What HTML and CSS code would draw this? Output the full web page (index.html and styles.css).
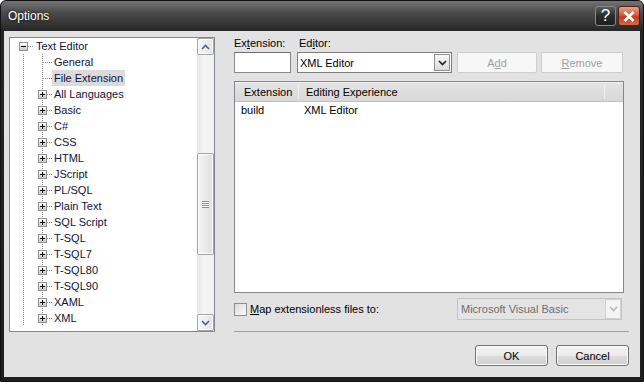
FILE: index.html
```html
<!DOCTYPE html>
<html lang="en">
<head>
    <meta charset="UTF-8">
    <title>Options</title>
    <link rel="stylesheet" href="styles.css">
</head>
<body>
    <div class="window">
        <div class="titlebar">
            <span class="title">Options</span>
            <span class="cap-btn help">?</span>
            <span class="cap-btn close">
                <svg width="12" height="11" viewBox="0 0 12 11"><path d="M1.5 1 L10.5 10 M10.5 1 L1.5 10" stroke="#fff" stroke-width="2.6" fill="none"/></svg>
            </span>
        </div>

        <div class="client">
            <div class="tree">
                <div class="tree-items">
                    <div class="row root">
                        <span class="twig"><span class="exp minus"></span><span class="dash"></span></span>
                        <span class="label">Text Editor</span>
                    </div>
                    <div class="children">
                        <div class="row"><span class="twig"><span class="gap"></span><span class="dash"></span></span><span class="label">General</span></div>
                        <div class="row"><span class="twig"><span class="gap"></span><span class="dash"></span></span><span class="label selected">File Extension</span></div>
                        <div class="row"><span class="twig"><span class="exp"></span><span class="dash"></span></span><span class="label">All Languages</span></div>
                        <div class="row"><span class="twig"><span class="exp"></span><span class="dash"></span></span><span class="label">Basic</span></div>
                        <div class="row"><span class="twig"><span class="exp"></span><span class="dash"></span></span><span class="label">C#</span></div>
                        <div class="row"><span class="twig"><span class="exp"></span><span class="dash"></span></span><span class="label">CSS</span></div>
                        <div class="row"><span class="twig"><span class="exp"></span><span class="dash"></span></span><span class="label">HTML</span></div>
                        <div class="row"><span class="twig"><span class="exp"></span><span class="dash"></span></span><span class="label">JScript</span></div>
                        <div class="row"><span class="twig"><span class="exp"></span><span class="dash"></span></span><span class="label">PL/SQL</span></div>
                        <div class="row"><span class="twig"><span class="exp"></span><span class="dash"></span></span><span class="label">Plain Text</span></div>
                        <div class="row"><span class="twig"><span class="exp"></span><span class="dash"></span></span><span class="label">SQL Script</span></div>
                        <div class="row"><span class="twig"><span class="exp"></span><span class="dash"></span></span><span class="label">T-SQL</span></div>
                        <div class="row"><span class="twig"><span class="exp"></span><span class="dash"></span></span><span class="label">T-SQL7</span></div>
                        <div class="row"><span class="twig"><span class="exp"></span><span class="dash"></span></span><span class="label">T-SQL80</span></div>
                        <div class="row"><span class="twig"><span class="exp"></span><span class="dash"></span></span><span class="label">T-SQL90</span></div>
                        <div class="row"><span class="twig"><span class="exp"></span><span class="dash"></span></span><span class="label">XAML</span></div>
                        <div class="row"><span class="twig"><span class="exp"></span><span class="dash"></span></span><span class="label">XML</span></div>
                    </div>
                </div>
                <div class="scrollbar">
                    <div class="sb-btn">
                        <svg width="9" height="6" viewBox="0 0 9 6"><path d="M1 5 L4.5 1.5 L8 5" stroke="#4d6185" stroke-width="1.6" fill="none"/></svg>
                    </div>
                    <div class="sb-track">
                        <div class="sb-space"></div>
                        <div class="sb-thumb"><span class="grip"></span></div>
                    </div>
                    <div class="sb-btn">
                        <svg width="9" height="6" viewBox="0 0 9 6"><path d="M1 1 L4.5 4.5 L8 1" stroke="#4d6185" stroke-width="1.6" fill="none"/></svg>
                    </div>
                </div>
            </div>

            <div class="panel">
                <div class="label-row">
                    <span class="lbl-ext">Ex<u>t</u>ension:</span>
                    <span>Ed<u>i</u>tor:</span>
                </div>
                <div class="input-row">
                    <span class="textbox"></span>
                    <span class="combo">
                        <span class="combo-text">XML Editor</span>
                        <span class="combo-btn">
                            <svg width="9" height="6" viewBox="0 0 9 6"><path d="M1 1 L4.5 4.5 L8 1" stroke="#222" stroke-width="1.7" fill="none"/></svg>
                        </span>
                    </span>
                    <span class="btn disabled add">A<u>d</u>d</span>
                    <span class="btn disabled remove"><u>R</u>emove</span>
                </div>

                <div class="listview">
                    <div class="lv-header">
                        <span class="col col-ext">Extension</span>
                        <span class="col col-exp">Editing Experience</span>
                        <span class="col col-rest"></span>
                    </div>
                    <div class="lv-row">
                        <span class="cell-ext">build</span>
                        <span>XML Editor</span>
                    </div>
                </div>

                <div class="option-row">
                    <span class="checkbox"></span>
                    <span class="opt-label"><u>M</u>ap extensionless files to:</span>
                    <span class="combo off">
                        <span class="combo-text">Microsoft Visual Basic</span>
                        <span class="combo-btn">
                            <svg width="9" height="6" viewBox="0 0 9 6"><path d="M1 1 L4.5 4.5 L8 1" stroke="#b8b8b8" stroke-width="1.6" fill="none"/></svg>
                        </span>
                    </span>
                </div>

                <div class="separator"></div>

                <div class="button-row">
                    <span class="btn">OK</span>
                    <span class="btn">Cancel</span>
                </div>
            </div>
        </div>
    </div>
</body>
</html>
```

FILE: styles.css
```css
body {
    margin: 0;
    background: #fff;
    font-family: "Liberation Sans", Arial, sans-serif;
    font-size: 11px;
    color: #000;
}
.window {
    width: 644px;
    height: 382px;
    box-sizing: border-box;
    display: flex;
    flex-direction: column;
    background: linear-gradient(#747474 0, #4a4a4a 12px, #262626 30px, #1e1e1e 100%);
    border: 1px solid #111;
    border-radius: 6px 6px 0 0;
}
.titlebar {
    height: 30px;
    display: flex;
    align-items: center;
    padding: 0 3px 0 7px;
}
.title {
    flex: 1;
    color: #fff;
    font-size: 12px;
    text-shadow: 0 0 3px #000;
}
.cap-btn {
    height: 20px;
    box-sizing: border-box;
    display: flex;
    align-items: center;
    justify-content: center;
    border-radius: 3px;
    margin-left: 2px;
}
.help {
    width: 21px;
    border: 1px solid #8a8a8a;
    background: linear-gradient(#5c5c5c, #2c2c2c 50%, #1e1e1e);
    color: #fff;
    font-size: 17px;
    font-family: "Liberation Sans", Arial, sans-serif;
}
.close {
    width: 22px;
    border: 1px solid #5a1d12;
    background: linear-gradient(#e9a08d, #d25c42 45%, #c13a1f 55%, #d66a4a);
}
.client {
    flex: 1;
    margin: 0 3px 4px 3px;
    background: #e2e2e2;
    display: flex;
    padding: 6px 11px 0 5px;
}

/* tree */
.tree {
    width: 206px;
    height: 295px;
    box-sizing: border-box;
    border: 1px solid #828790;
    background: #fff;
    display: flex;
}
.tree-items {
    flex: 1;
    overflow: hidden;
    color: #121236;
}
.row {
    height: 16px;
    display: flex;
    align-items: center;
    padding-left: 28px;
}
.row.root {
    padding-left: 9px;
}
.children {
    background-image:
        repeating-linear-gradient(to bottom, #8a8a8a 0 1px, transparent 1px 2px),
        repeating-linear-gradient(to bottom, #8a8a8a 0 1px, transparent 1px 2px);
    background-size: 1px 100%, 1px 100%;
    background-position: 13px 0, 32px 0;
    background-repeat: no-repeat;
}
.twig {
    width: 14px;
    display: flex;
    align-items: center;
}
.root .twig {
    width: 15px;
}
.gap {
    width: 5px;
}
.dash {
    flex: 1;
    height: 1px;
    background: repeating-linear-gradient(to right, #8a8a8a 0 1px, transparent 1px 2px);
}
.exp {
    width: 9px;
    height: 9px;
    box-sizing: border-box;
    border: 1px solid #919191;
    background:
        linear-gradient(#000, #000) center / 5px 1px no-repeat,
        linear-gradient(#000, #000) center / 1px 5px no-repeat,
        linear-gradient(#fff, #c9c9c9);
}
.exp.minus {
    background:
        linear-gradient(#000, #000) center / 5px 1px no-repeat,
        linear-gradient(#fff, #c9c9c9);
}
.label {
    padding: 0 2px;
    line-height: 16px;
    white-space: nowrap;
}
.label.selected {
    background: #dbdbdb;
}

/* scrollbar */
.scrollbar {
    width: 17px;
    display: flex;
    flex-direction: column;
    background: linear-gradient(to right, #e6e6e6, #f6f6f6 40%, #f1f1f1);
}
.sb-btn {
    height: 17px;
    box-sizing: border-box;
    border: 1px solid #a3a3a3;
    border-radius: 2px;
    background: linear-gradient(to right, #f6f6f6, #e4e4e4);
    box-shadow: inset 0 0 0 1px #fff;
    display: flex;
    align-items: center;
    justify-content: center;
}
.sb-track {
    flex: 1;
    display: flex;
    flex-direction: column;
}
.sb-space {
    height: 98px;
}
.sb-thumb {
    height: 102px;
    box-sizing: border-box;
    border: 1px solid #a3a3a3;
    border-radius: 2px;
    background: linear-gradient(to right, #f4f4f4, #e0e0e0);
    box-shadow: inset 0 0 0 1px #fff;
    display: flex;
    align-items: center;
    justify-content: center;
}
.grip {
    width: 7px;
    height: 7px;
    background: repeating-linear-gradient(to bottom, #8c8c8c 0 1px, #fff 1px 2px);
}

/* right panel */
.panel {
    width: 395px;
    margin-left: 19px;
    display: flex;
    flex-direction: column;
}
.label-row {
    height: 14px;
    line-height: 13px;
    display: flex;
}
.lbl-ext {
    width: 65px;
}
.input-row {
    margin-top: 1px;
    height: 21px;
    display: flex;
}
.textbox {
    width: 57px;
    box-sizing: border-box;
    border: 1px solid #8a8a8a;
    border-top-color: #6f6f6f;
    background: #fff;
}
.combo {
    width: 155px;
    margin-left: 6px;
    box-sizing: border-box;
    border: 1px solid #7e7e7e;
    background: #fff;
    display: flex;
    align-items: center;
}
.combo-text {
    flex: 1;
    padding-left: 2px;
}
.combo-btn {
    width: 16px;
    height: 17px;
    margin-right: 1px;
    box-sizing: border-box;
    border: 1px solid #8f8f8f;
    background: linear-gradient(#f7f7f7, #dcdcdc);
    display: flex;
    align-items: center;
    justify-content: center;
}
.btn {
    box-sizing: border-box;
    height: 21px;
    border: 1px solid #707070;
    border-radius: 3px;
    background: linear-gradient(#f3f3f3, #ebebeb 50%, #dddddd 50%, #cfcfcf);
    box-shadow: inset 0 0 0 1px #fcfcfc;
    display: flex;
    align-items: center;
    justify-content: center;
}
.btn.disabled {
    border-color: #cdcdcd;
    background: #f7f7f7;
    box-shadow: none;
    color: #a0a0a0;
    border-radius: 2px;
}
.add {
    width: 80px;
    margin-left: 5px;
}
.remove {
    width: 82px;
    margin-left: 4px;
}

/* list */
.listview {
    width: 390px;
    height: 212px;
    margin-top: 8px;
    box-sizing: border-box;
    border: 1px solid #828790;
    background: #fff;
}
.lv-header {
    height: 18px;
    display: flex;
    background: linear-gradient(#e4e4e4, #d8d8d8);
    border-bottom: 1px solid #c0c0c0;
    border-top: 1px solid #f2f2f2;
}
.col {
    display: flex;
    align-items: center;
    border-right: 1px solid #f0f0f0;
    margin: 2px 0;
}
.col-ext {
    width: 54px;
    padding-left: 9px;
}
.col-exp {
    width: 298px;
    padding-left: 7px;
}
.col-rest {
    flex: 1;
    border-right: none;
}
.lv-row {
    height: 16px;
    line-height: 16px;
    display: flex;
    padding-left: 6px;
}
.cell-ext {
    width: 63px;
}

/* bottom */
.option-row {
    margin-top: 5px;
    height: 22px;
    display: flex;
    align-items: center;
}
.checkbox {
    width: 13px;
    height: 13px;
    box-sizing: border-box;
    border: 1px solid #8e8f8f;
    background: linear-gradient(135deg, #dcdcdc, #fafafa);
}
.opt-label {
    margin-left: 3px;
    flex: 1;
}
.combo.off {
    width: 165px;
    height: 22px;
    margin-right: 7px;
    border-color: #c4c4c4;
    background: #e4e4e4;
    color: #6d6d6d;
}
.off .combo-text {
    padding-left: 3px;
}
.off .combo-btn {
    border-color: #d0d0d0;
    background: #f4f4f4;
    height: 20px;
    margin-right: 0;
}
.separator {
    margin-top: 11px;
    height: 1px;
    background: #a0a0a0;
}
.button-row {
    margin-top: 13px;
    display: flex;
    justify-content: flex-end;
    gap: 8px;
}
.button-row .btn {
    width: 73px;
}
```
